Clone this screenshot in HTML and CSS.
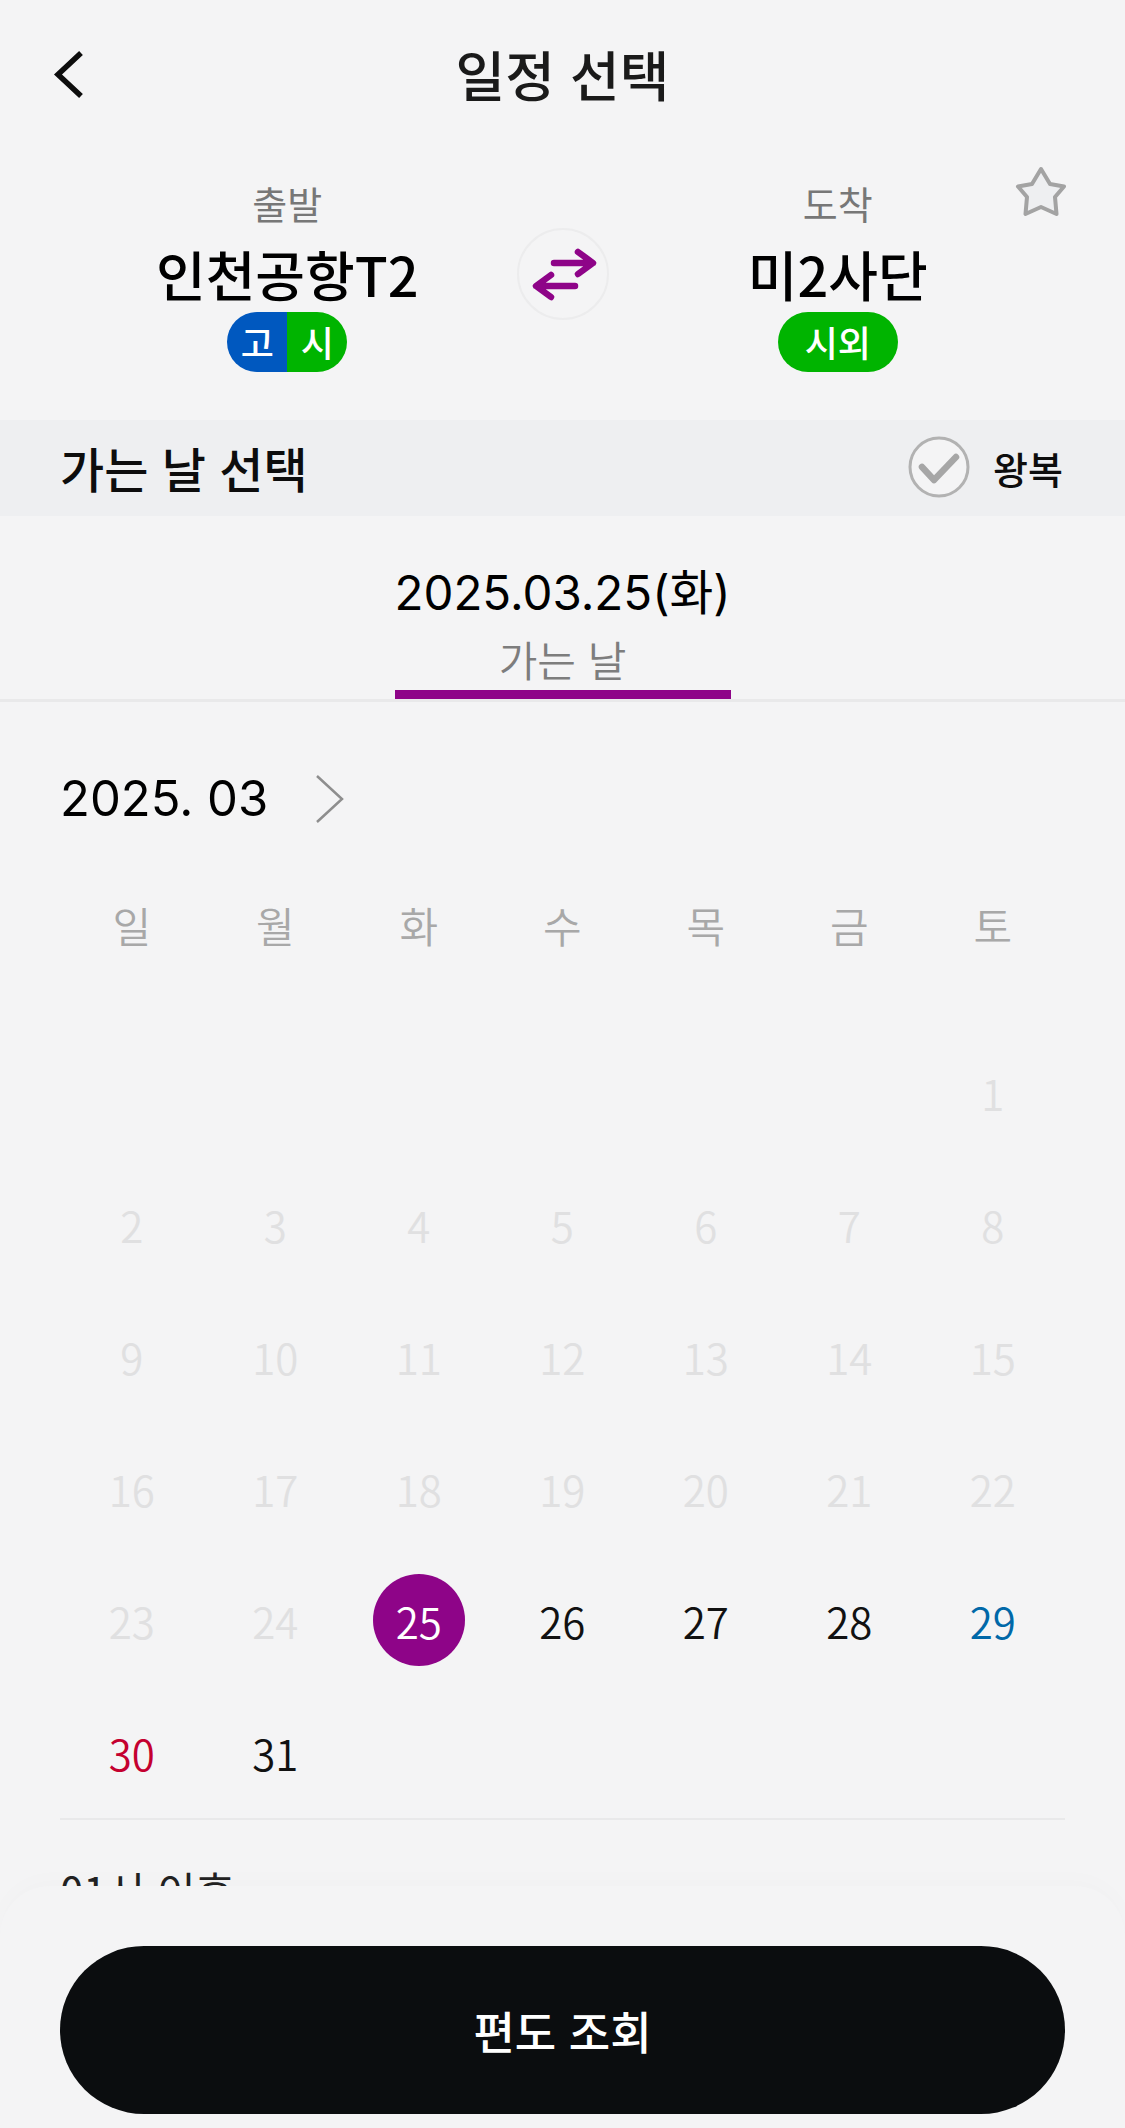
FILE: index.html
```html
<!DOCTYPE html>
<html lang="ko">
<head>
    <meta charset="UTF-8">
    <meta name="viewport" content="width=device-width, initial-scale=1.0">
    <title>일정 선택</title>
    <link rel="stylesheet" href="styles.css">
</head>
<body>
<div class="page">
    <header class="topbar">
        <svg class="back" width="40" height="60" viewBox="0 0 40 60"><path d="M29 7 L6 28.500 L29 50" fill="none" stroke="#0d0d0d" stroke-width="5.500"/></svg>
        <h1>일정 선택</h1>
    </header>

    <section class="route">
        <div class="stop">
            <span class="stop-label">출발</span>
            <strong class="stop-name">인천공항T2</strong>
            <span class="badge"><i class="blue">고</i><i class="green">시</i></span>
        </div>
        <div class="swap">
            <svg width="92" height="92" viewBox="0 0 92 92"><path d="M37 35 H75 M61 24 L76 35 L61 46 M58 58 H20 M34 47 L19 58 L34 69" fill="none" stroke="#8e0488" stroke-width="6.500" stroke-linecap="round" stroke-linejoin="round"/></svg>
        </div>
        <div class="stop">
            <span class="stop-label">도착</span>
            <strong class="stop-name">미2사단</strong>
            <span class="badge"><i class="green wide">시외</i></span>
        </div>
        <svg class="star" width="60" height="60" viewBox="0 0 60 60"><path d="M30 6 L39 21 L53 23.500 L44 34 L45.500 51 L30 44 L14.500 51 L16 34 L7 23.500 L21 21 Z" fill="#eeeff1" stroke="#a3a3a3" stroke-width="4" stroke-linejoin="round"/></svg>
    </section>

    <section class="section-bar">
        <h2>가는 날 선택</h2>
        <div class="roundtrip">
            <svg width="64" height="64" viewBox="0 0 64 64"><circle cx="32" cy="32" r="29" fill="#f4f4f5" stroke="#b2b2b2" stroke-width="3"/><path d="M15 32 L27 45 L49 22" fill="none" stroke="#a6a6a6" stroke-width="6.500" stroke-linecap="round" stroke-linejoin="round"/></svg>
            <span>왕복</span>
        </div>
    </section>

    <div class="date-tab">
        <div class="date-tab-item">
            <span class="date-value">2025.03.25(화)</span>
            <span class="date-label">가는 날</span>
        </div>
    </div>

    <main class="calendar">
        <div class="month">
            <span>2025. 03</span>
            <svg width="30" height="48" viewBox="0 0 30 48"><path d="M2 1 L27 24 L2 47" fill="none" stroke="#8e8e8e" stroke-width="2.500"/></svg>
        </div>
        <div class="week-head">
            <span>일</span><span>월</span><span>화</span><span>수</span><span>목</span><span>금</span><span>토</span>
        </div>
        <div class="days">
            <span></span><span></span><span></span><span></span><span></span><span></span><span class="off">1</span>
            <span class="off">2</span><span class="off">3</span><span class="off">4</span><span class="off">5</span><span class="off">6</span><span class="off">7</span><span class="off">8</span>
            <span class="off">9</span><span class="off">10</span><span class="off">11</span><span class="off">12</span><span class="off">13</span><span class="off">14</span><span class="off">15</span>
            <span class="off">16</span><span class="off">17</span><span class="off">18</span><span class="off">19</span><span class="off">20</span><span class="off">21</span><span class="off">22</span>
            <span class="off">23</span><span class="off">24</span><span class="selected">25</span><span>26</span><span>27</span><span>28</span><span class="sat">29</span>
            <span class="sun">30</span><span>31</span>
        </div>
        <div class="note">01시 이후</div>
    </main>

    <footer class="sheet">
        <button class="cta">편도 조회</button>
    </footer>
</div>
</body>
</html>
```

FILE: styles.css
```css
* {
    box-sizing: border-box;
}
body {
    margin: 0;
    background: #f4f4f5;
    font-family: "Noto Sans CJK KR", "Noto Sans", sans-serif;
    color: #0d0d0d;
}
.page {
    position: relative;
    width: 1125px;
    height: 2128px;
    overflow: hidden;
}

/* top bar */
.topbar {
    position: relative;
    height: 150px;
    padding-bottom: 4px;
    display: flex;
    align-items: center;
    justify-content: center;
}
.topbar h1 {
    margin: 0;
    font-size: 54px;
    font-weight: 500;
    color: #1a1a1a;
}
.back {
    position: absolute;
    left: 52px;
    top: 46px;
}

/* route */
.route {
    position: relative;
    height: 270px;
    padding: 25px 58px 0;
    display: grid;
    grid-template-columns: 1fr 92px 1fr;
}
.stop {
    display: flex;
    flex-direction: column;
    align-items: center;
}
.stop-label {
    font-size: 38px;
    line-height: 56px;
    color: #777;
}
.stop-name {
    margin-top: 5px;
    font-size: 54px;
    line-height: 76px;
    font-weight: 500;
    color: #000;
}
.badge {
    display: flex;
    height: 60px;
    border-radius: 30px;
    overflow: hidden;
    color: #fff;
    font-size: 36px;
    font-weight: 500;
    line-height: 58px;
}
.badge i {
    font-style: normal;
    width: 60px;
    text-align: center;
}
.badge i.wide {
    width: 120px;
}
.blue {
    background: #0058bf;
}
.green {
    background: #00b400;
}
.swap {
    width: 92px;
    height: 92px;
    margin-top: 53px;
    border-radius: 50%;
    border: 2px solid #ececed;
}
.swap svg {
    display: block;
    margin: -2px;
}
.star {
    position: absolute;
    left: 1011px;
    top: 13px;
}

/* section bar */
.section-bar {
    height: 96px;
    padding: 0 62px 2px 60px;
    background: #eeeff1;
    display: flex;
    align-items: center;
    justify-content: space-between;
}
.section-bar h2 {
    margin: 0;
    font-size: 48px;
    font-weight: 500;
    color: #0d0d0d;
}
.roundtrip {
    display: flex;
    align-items: center;
    gap: 22px;
    font-size: 38px;
    font-weight: 500;
}
.roundtrip svg {
    display: block;
}

/* selected date tab */
.date-tab {
    height: 186px;
    padding-top: 46px;
    border-bottom: 3px solid #e9e9ea;
    display: flex;
    justify-content: center;
}
.date-tab-item {
    width: 336px;
    height: 137px;
    border-bottom: 9px solid #8e0488;
    display: flex;
    flex-direction: column;
    align-items: center;
}
.date-value {
    font-family: Inter, "Noto Sans CJK KR", sans-serif;
    font-size: 47.500px;
    line-height: 62px;
    white-space: nowrap;
    color: #000;
}
.date-label {
    margin-top: 3px;
    font-size: 42px;
    font-weight: 350;
    line-height: 64px;
    color: #7d7d7d;
}

/* calendar */
.calendar {
    padding: 0 60px;
}
.month {
    height: 193px;
    display: flex;
    align-items: center;
    gap: 47px;
    font-family: Inter, "Noto Sans CJK KR", sans-serif;
    font-size: 49px;
    color: #000;
}
.week-head,
.days {
    display: grid;
    grid-template-columns: repeat(7, 143.500px);
    text-align: center;
}
.week-head {
    height: 60px;
    line-height: 60px;
    font-size: 42px;
    font-weight: 350;
    color: #a8a8a8;
}
.days {
    grid-auto-rows: 132px;
    margin-top: 71px;
    font-size: 42px;
    font-weight: 350;
    color: #111;
}
.days span {
    display: flex;
    align-items: center;
    justify-content: center;
}
.days .off {
    color: #e0e0e1;
}
.days .sat {
    color: #0068a8;
}
.days .sun {
    color: #c4002f;
}
.days .selected {
    color: #fff;
    position: relative;
    z-index: 0;
}
.days .selected::before {
    content: "";
    position: absolute;
    z-index: -1;
    left: 26px;
    top: 20px;
    width: 92px;
    height: 92px;
    border-radius: 50%;
    background: #8e0488;
}
.note {
    padding-top: 40px;
    border-top: 2px solid #e9e9ea;
    font-size: 42px;
    line-height: 60px;
    color: #222;
}

/* bottom sheet */
.sheet {
    position: absolute;
    left: 0;
    right: 0;
    bottom: 0;
    height: 242px;
    padding: 60px 60px 0;
    background: #f4f4f5;
    border-radius: 50px 50px 0 0;
    box-shadow: 0 -6px 24px rgba(0, 0, 0, 0.015);
}
.cta {
    display: block;
    width: 100%;
    height: 168px;
    border: 0;
    border-radius: 84px;
    background: #0b0d0f;
    color: #fff;
    font-family: inherit;
    font-size: 45px;
    font-weight: 500;
}
```
